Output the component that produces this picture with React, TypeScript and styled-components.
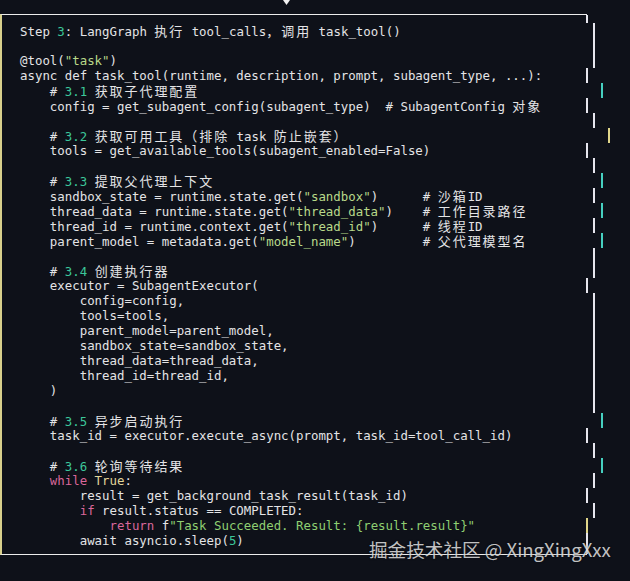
import React from "react";
import styled, { createGlobalStyle } from "styled-components";

const CELL = 7.5;

const Global = createGlobalStyle`
  html, body { margin: 0; padding: 0; background: #0e1119; }
  body { width: 630px; height: 581px; overflow: hidden; }
`;

const Page = styled.div`
  position: relative;
  width: 630px;
  height: 581px;
  background: #0e1119;
  overflow: hidden;
`;

const Header = styled.div`
  height: 14px;
  display: flex;
  align-items: flex-start;
  padding-left: 283px;
`;

const Box = styled.div`
  width: 587px;
  box-sizing: border-box;
  border-top: 1.5px solid #ececec;
  border-left: 2px solid #d8d08c;
  border-bottom: 1.5px solid #ececec;
  display: flex;
  flex-direction: column;
`;

const Row = styled.div<{ $h?: number }>`
  display: flex;
  align-items: stretch;
  height: ${(p) => p.$h ?? 15}px;
  padding-left: 18px;
`;

const Code = styled.div`
  flex: none;
  width: 565.5px;
  white-space: pre;
  font-family: "DejaVu Sans Mono", "Liberation Mono", monospace;
  font-size: 12.4px;
  line-height: 15px;
  color: #e4e4e6;
  overflow: visible;
`;

const Bar = styled.div<{ $shift: number; $color: string }>`
  flex: none;
  width: 2px;
  margin-left: ${(p) => p.$shift * CELL}px;
  background: ${(p) => p.$color};
`;

const Tok = styled.span<{ $k: string }>`
  color: ${(p) =>
    p.$k === "n"
      ? "#3cc79a"
      : p.$k === "s"
      ? "#b9d98a"
      : p.$k === "k"
      ? "#d9679b"
      : p.$k === "c"
      ? "#e2d69b"
      : p.$k === "f"
      ? "#8fcf72"
      : "#e4e4e6"};
`;

const Cjk = styled.span`
  font-family: "Noto Sans CJK SC", sans-serif;
  font-size: 13px;
  line-height: 15px;
  letter-spacing: 1.94px;
`;

const Watermark = styled.div`
  position: absolute;
  left: 369px;
  top: 538px;
  font-family: "Noto Sans CJK SC", "Noto Sans", sans-serif;
  font-size: 18.6px;
  line-height: 22px;
  color: rgba(236, 236, 236, 0.82);
  text-shadow: 0 0 2px rgba(0, 0, 0, 0.5);
  white-space: nowrap;
`;

type T = [string, string];
const W = "#e6e6ee";
const TEAL = "#46d0c0";
const YEL = "#e0d68a";

const L: { t: T[]; s: number; c: string }[] = [
  { t: [["d", "Step "], ["n", "3"], ["d", ": LangGraph 执行 tool_calls，调用 task_tool()"]], s: 1, c: W },
  { t: [], s: 1, c: W },
  { t: [["d", "@tool("], ["s", '"task"'], ["d", ")"]], s: 1, c: W },
  { t: [["d", "async def task_tool(runtime, description, prompt, subagent_type, ...):"]], s: 0, c: W },
  { t: [["d", "    # "], ["n", "3.1"], ["d", " 获取子代理配置"]], s: 2, c: TEAL },
  { t: [["d", "    config = get_subagent_config(subagent_type)  # SubagentConfig 对象"]], s: 0, c: W },
  { t: [], s: 1, c: W },
  { t: [["d", "    # "], ["n", "3.2"], ["d", " 获取可用工具（排除 task 防止嵌套）"]], s: 3, c: YEL },
  { t: [["d", "    tools = get_available_tools(subagent_enabled=False)"]], s: 0, c: W },
  { t: [], s: 1, c: W },
  { t: [["d", "    # "], ["n", "3.3"], ["d", " 提取父代理上下文"]], s: 2, c: TEAL },
  { t: [["d", "    sandbox_state = runtime.state.get("], ["s", '"sandbox"'], ["d", ")      # 沙箱ID"]], s: 1, c: W },
  { t: [["d", "    thread_data = runtime.state.get("], ["s", '"thread_data"'], ["d", ")    # 工作目录路径"]], s: 2, c: TEAL },
  { t: [["d", "    thread_id = runtime.context.get("], ["s", '"thread_id"'], ["d", ")      # 线程ID"]], s: 1, c: W },
  { t: [["d", "    parent_model = metadata.get("], ["s", '"model_name"'], ["d", ")         # 父代理模型名"]], s: 2, c: TEAL },
  { t: [], s: 1, c: W },
  { t: [["d", "    # "], ["n", "3.4"], ["d", " 创建执行器"]], s: 1, c: W },
  { t: [["d", "    executor = SubagentExecutor("]], s: 0, c: W },
  { t: [["d", "        config=config,"]], s: 1, c: W },
  { t: [["d", "        tools=tools,"]], s: 1, c: W },
  { t: [["d", "        parent_model=parent_model,"]], s: 1, c: W },
  { t: [["d", "        sandbox_state=sandbox_state,"]], s: 1, c: W },
  { t: [["d", "        thread_data=thread_data,"]], s: 1, c: W },
  { t: [["d", "        thread_id=thread_id,"]], s: 1, c: W },
  { t: [["d", "    )"]], s: 1, c: W },
  { t: [], s: 1, c: W },
  { t: [["d", "    # "], ["n", "3.5"], ["d", " 异步启动执行"]], s: 2, c: TEAL },
  { t: [["d", "    task_id = executor.execute_async(prompt, task_id=tool_call_id)"]], s: 0, c: W },
  { t: [], s: 1, c: W },
  { t: [["d", "    # "], ["n", "3.6"], ["d", " 轮询等待结果"]], s: 2, c: TEAL },
  { t: [["d", "    "], ["k", "while"], ["c", " True"], ["d", ":"]], s: 1, c: W },
  { t: [["d", "        result = get_background_task_result(task_id)"]], s: 0, c: W },
  { t: [["d", "        "], ["k", "if"], ["d", " result.status == COMPLETED:"]], s: 1, c: W },
  { t: [["d", "            "], ["k", "return"], ["d", " f"], ["f", '"Task Succeeded. Result: {result.result}"']], s: 0, c: YEL },
  { t: [["d", "        await asyncio.sleep("], ["n", "5"], ["d", ")"]], s: 0, c: W },
];

const CJK_RE = /([\u3000-\u303f\u3400-\u9fff\uff00-\uffef]+)/;

function renderText(text: string) {
  return text.split(CJK_RE).map((part, i) =>
    i % 2 === 1 ? <Cjk key={i}>{part}</Cjk> : <React.Fragment key={i}>{part}</React.Fragment>
  );
}

export default function App() {
  return (
    <Page>
      <Global />
      <Header>
        <svg width="7" height="5" viewBox="0 0 7 5">
          <polygon points="0,0 7,0 3.5,5" fill="#f2f2f2" />
        </svg>
      </Header>
      <Box>
        <Row $h={8}>
          <Code />
          <Bar $shift={0} $color={W} />
        </Row>
        {L.map((line, i) => (
          <Row key={i}>
            <Code>
              {line.t.map(([k, txt], j) => (
                <Tok key={j} $k={k}>
                  {renderText(txt)}
                </Tok>
              ))}
            </Code>
            <Bar $shift={line.s} $color={line.c} />
          </Row>
        ))}
        <Row $h={6}>
          <Code />
          <Bar $shift={0} $color={W} />
        </Row>
      </Box>
      <Watermark>掘金技术社区 @ XingXingXxx</Watermark>
    </Page>
  );
}
